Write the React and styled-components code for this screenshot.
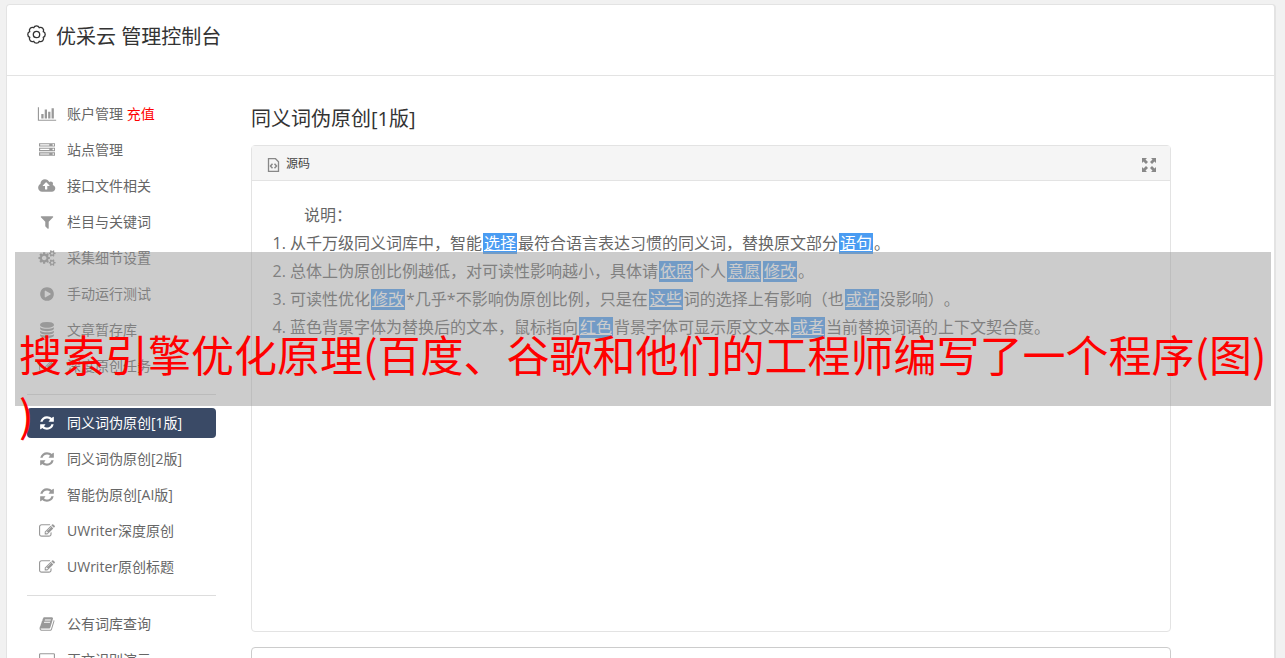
import React from "react";
import styled, { createGlobalStyle, css } from "styled-components";

const GlobalStyle = createGlobalStyle`
  * {
    box-sizing: border-box;
  }

  body {
    margin: 0;
    height: 100vh;
    overflow: hidden;
    background-color: #f1f1f1;
    color: #666;
    font-family: "Open Sans", "Noto Sans CJK SC", sans-serif;
    font-size: 14px;
    font-weight: 400;
    text-spacing-trim: space-all;
  }
`;

const Page = styled.div`
  position: relative;
  padding: 4px 9px 0 6px;
`;

const Panel = styled.div`
  min-height: 100vh;
  background-color: white;
  border: 1px solid #e3e3e3;
  border-right-width: 2px;
  border-radius: 4px;
`;

const Header = styled.header`
  display: flex;
  align-items: flex-start;
  gap: 10px;
  height: 71px;
  padding: 16px 20px;
  border-bottom: 1px solid #e3e3e3;
  color: #333;
`;

const HeaderIcon = styled.svg`
  width: 19px;
  height: 19px;
  margin-top: 4px;
`;

const Title = styled.h1`
  margin: 0;
  font-size: 20px;
  font-weight: 400;
  line-height: 31px;
`;

const Columns = styled.div`
  display: flex;
  gap: 35px;
  padding: 20px 103px 0 20px;
`;

const Sidebar = styled.nav`
  flex: 0 0 189px;
`;

const NavList = styled.ul`
  margin: 0;
  padding: 0 0 10px;
  list-style: none;

  & + & {
    padding-top: 10px;
    border-top: 1px solid #ddd;
  }
`;

const NavItem = styled.li`
  padding: 3px 0;
`;

const NavLink = styled.a`
  display: flex;
  align-items: center;
  gap: 10px;
  height: 30px;
  padding: 0 10px;
  border-radius: 4px;
  color: #666;
  line-height: 30px;
  text-decoration: none;
  white-space: nowrap;

  svg {
    flex: 0 0 20px;
    height: 16px;
    color: #999;
    fill: currentColor;
  }

  ${props => props.$active && css`
    background-color: #3a4a66;
    color: white;

    svg {
      color: white;
    }
  `}
`;

const Recharge = styled.span`
  color: red;
`;

const Main = styled.main`
  flex: 1;
  min-width: 0;
`;

const Heading = styled.h2`
  margin: 7px 0 11px;
  color: #333;
  font-size: 20px;
  font-weight: 400;
  line-height: 31px;
`;

const Editor = styled.section`
  border: 1px solid #e3e3e3;
  border-radius: 4px;
`;

const Toolbar = styled.div`
  display: flex;
  align-items: center;
  justify-content: space-between;
  height: 35px;
  padding: 0 13px 0 15px;
  border-bottom: 1px solid #e3e3e3;
  background-color: #f5f5f5;
`;

const ToolButton = styled.button`
  display: flex;
  align-items: center;
  gap: 6px;
  padding: 0;
  border: none;
  background: none;
  color: #444;
  font: inherit;
  font-size: 12px;

  svg {
    margin-top: 3px;
    color: #888;
  }
`;

const Content = styled.div`
  min-height: 450px;
  padding: 20px;
  font-size: 16px;
  line-height: 28px;
`;

const Intro = styled.p`
  margin: 0;
  text-indent: 2em;
`;

const Rules = styled.ol`
  margin: 0;
  padding-left: 18px;
`;

const Word = styled.u`
  display: inline-block;
  margin: 0 1px;
  padding: 0 1px;
  background-color: #4a9cf2;
  color: white;
  line-height: 21px;
`;

const Source = styled.textarea`
  display: block;
  width: 100%;
  height: 120px;
  margin-top: 15px;
  border: 1px solid #ccc;
  border-radius: 4px;
  resize: none;
`;

const Banner = styled.div`
  position: absolute;
  top: 252px;
  left: 15px;
  right: 14px;
  height: 154px;
  padding: 71px 0 0 4px;
  background-color: rgba(153, 153, 153, 0.5);
  color: red;
  font-family: "Noto Sans CJK SC", sans-serif;
  font-size: 43px;
  line-height: 60px;
  line-break: anywhere;
`;

const icons = {
  chart: ["0 0 2048 1792", "M640 896v512h-256v-512h256zm384-512v1024h-256v-1024h256zm1024 1152v128h-2048v-1536h128v1408h1920zm-640-896v768h-256v-768h256zm384-384v1152h-256v-1152h256z"],
  server: ["0 0 1792 1792", "M128 1408h1024v-128h-1024v128zm0-512h1024v-128h-1024v128zm1568 448q0-40-28-68t-68-28-68 28-28 68 28 68 68 28 68-28 28-68zm-1568-960h1024v-128h-1024v128zm1568 448q0-40-28-68t-68-28-68 28-28 68 28 68 68 28 68-28 28-68zm0-512q0-40-28-68t-68-28-68 28-28 68 28 68 68 28 68-28 28-68zm96 832v384h-1792v-384h1792zm0-512v384h-1792v-384h1792zm0-512v384h-1792v-384h1792z"],
  upload: ["0 0 1856 1792", "M1216 864q0-14-9-23l-352-352q-9-9-23-9t-23 9l-351 351q-10 12-10 24 0 14 9 23t23 9h224v352q0 13 9.5 22.5t22.5 9.5h192q13 0 22.5-9.5t9.5-22.5v-352h224q13 0 22.5-9.5t9.5-22.5zm640 288q0 159-112.5 271.5t-271.5 112.5h-1088q-185 0-316.5-131.5t-131.5-316.5q0-130 70-240t188-165q-2-30-2-43 0-212 150-362t362-150q156 0 285.5 87t188.5 231q71-62 166-62 106 0 181 75t75 181q0 76-41 138 130 31 213.5 135.5t83.5 238.5z"],
  filter: ["0 0 1792 1792", "M1595 295q17 41-14 70l-493 493v742q0 42-39 59-13 5-25 5-27 0-45-19l-256-256q-19-19-19-45v-486l-493-493q-31-29-14-70 17-39 59-39h1280q42 0 59 39z"],
  cogs: ["0 0 1920 1792", "M896 896q0-106-75-181t-181-75-181 75-75 181 75 181 181 75 181-75 75-181zm768 512q0-52-38-90t-90-38-90 38-38 90q0 53 37.5 90.5t90.5 37.5 90.5-37.5 37.5-90.5zm0-1024q0-52-38-90t-90-38-90 38-38 90q0 53 37.5 90.5t90.5 37.5 90.5-37.5 37.5-90.5zm-384 421v185q0 10-7 19.5t-16 10.5l-155 24q-11 35-32 76 34 48 90 115 7 11 7 20 0 12-7 19-23 30-82.5 89.5t-78.5 59.5q-11 0-21-7l-115-90q-37 19-77 31-11 108-23 155-7 24-30 24h-186q-11 0-20-7.5t-10-17.5l-23-153q-34-10-75-31l-118 89q-7 7-20 7-11 0-21-8-144-133-144-160 0-9 7-19 10-14 41-53t47-61q-23-44-35-82l-152-24q-10-1-17-9.5t-7-19.5v-185q0-10 7-19.5t16-10.5l155-24q11-35 32-76-34-48-90-115-7-11-7-20 0-12 7-20 22-30 82-89t79-59q11 0 21 7l115 90q34-18 77-32 11-108 23-154 7-24 30-24h186q11 0 20 7.5t10 17.5l23 153q34 10 75 31l118-89q8-7 20-7 11 0 21 8 144 133 144 160 0 8-7 19-12 16-42 54t-45 60q23 48 34 82l152 23q10 2 17 10.5t7 19.5zm640 533v140q0 16-149 31-12 27-30 52 51 113 51 138 0 4-4 7-122 71-124 71-8 0-46-47t-52-68q-20 2-30 2t-30-2q-14 21-52 68t-46 47q-2 0-124-71-4-3-4-7 0-25 51-138-18-25-30-52-149-15-149-31v-140q0-16 149-31 13-29 30-52-51-113-51-138 0-4 4-7 4-2 35-20t59-34 30-16q8 0 46 46.5t52 67.5q20-2 30-2t30 2q51-71 92-112l6-2q4 0 124 70 4 3 4 7 0 25-51 138 17 23 30 52 149 15 149 31zm0-1024v140q0 16-149 31-12 27-30 52 51 113 51 138 0 4-4 7-122 71-124 71-8 0-46-47t-52-68q-20 2-30 2t-30-2q-14 21-52 68t-46 47q-2 0-124-71-4-3-4-7 0-25 51-138-18-25-30-52-149-15-149-31v-140q0-16 149-31 13-29 30-52-51-113-51-138 0-4 4-7 4-2 35-20t59-34 30-16q8 0 46 46.5t52 67.5q20-2 30-2t30 2q51-71 92-112l6-2q4 0 124 70 4 3 4 7 0 25-51 138 17 23 30 52 149 15 149 31z"],
  play: ["0 0 1792 1792", "M896 128q209 0 385.5 103t279.5 279.5 103 385.5-103 385.5-279.5 279.5-385.5 103-385.5-103-279.5-279.5-103-385.5 103-385.5 279.5-279.5 385.5-103zm384 823q32-18 32-55t-32-55l-544-320q-31-19-64-1-32 19-32 56v640q0 37 32 56 16 8 32 8 17 0 32-9z"],
  database: ["0 0 1792 1792", "M896 768q237 0 443-43t325-127v170q0 69-103 128t-280 93.5-385 34.5-385-34.5-280-93.5-103-128v-170q119 84 325 127t443 43zm0 768q237 0 443-43t325-127v170q0 69-103 128t-280 93.5-385 34.5-385-34.5-280-93.5-103-128v-170q119 84 325 127t443 43zm0-384q237 0 443-43t325-127v170q0 69-103 128t-280 93.5-385 34.5-385-34.5-280-93.5-103-128v-170q119 84 325 127t443 43zm0-1152q208 0 385 34.5t280 93.5 103 128v128q0 69-103 128t-280 93.5-385 34.5-385-34.5-280-93.5-103-128v-128q0-69 103-128t280-93.5 385-34.5z"],
  edit: ["0 0 1792 1792", "M888 1184l116-116-152-152-116 116v56h96v96h56zm440-720q-16-16-33 1l-350 350q-17 17-1 33t33-1l350-350q17-17 1-33zm80 594v190q0 119-84.5 203.5t-203.5 84.5h-832q-119 0-203.5-84.5t-84.5-203.5v-832q0-119 84.5-203.5t203.5-84.5h832q63 0 117 25 15 7 18 23 3 17-9 29l-49 49q-14 14-32 8-23-6-45-6h-832q-66 0-113 47t-47 113v832q0 66 47 113t113 47h832q66 0 113-47t47-113v-126q0-13 9-22l64-64q15-15 35-7t20 29zm-96-738l288 288-672 672h-288v-288zm444 132l-92 92-288-288 92-92q28-28 68-28t68 28l152 152q28 28 28 68t-28 68z"],
  refresh: ["0 0 1792 1792", "M1639 1056q0 5-1 7-64 268-268 434.5t-478 166.5q-146 0-282.5-55t-243.5-157l-129 129q-19 19-45 19t-45-19-19-45v-448q0-26 19-45t45-19h448q26 0 45 19t19 45-19 45l-137 137q71 66 161 102t187 36q134 0 250-65t186-179q11-17 53-117 8-23 30-23h192q13 0 22.5 9.5t9.5 22.5zm25-800v448q0 26-19 45t-45 19h-448q-26 0-45-19t-19-45 19-45l138-138q-148-137-349-137-134 0-250 65t-186 179q-11 17-53 117-8 23-30 23h-199q-13 0-22.5-9.5t-9.5-22.5v-7q65-268 270-434.5t480-166.5q146 0 284 55.5t245 156.5l130-129q19-19 45-19t45 19 19 45z"],
  book: ["0 0 1792 1792", "M1703 478q40 57 18 129l-275 906q-19 64-76.5 107.5t-122.5 43.5h-923q-77 0-148.5-53.5t-99.5-131.5q-24-67-2-127 0-4 3-27t4-37q1-8-3-21.5t-3-19.5q2-11 8-21t16.5-23.5 16.5-23.5q23-38 45-91.5t30-91.5q3-10 .5-30t-.5-28q3-11 17-28t17-23q21-36 42-92t25-90q1-9-2.5-32t.5-28q4-13 22-30.5t22-22.5q19-26 42.5-84.5t27.5-96.5q1-8-3-25.5t-2-26.5q2-8 9-18t18-23 17-21q8-12 16.5-30.5t15-35 16-36 19.5-32 26.5-23.5 36-11.5 47.5 5.5l-1 3q38-9 51-9h761q74 0 114 56t18 130l-274 906q-36 119-71.5 153.5t-128.5 34.5h-869q-27 0-38 15-11 16-1 43 24 70 144 70h923q29 0 56-15.5t35-41.5l300-987q7-22 5-57 38 15 59 43zm-1064 2q-4 13 2 22.5t20 9.5h608q13 0 25.5-9.5t16.5-22.5l21-64q4-13-2-22.5t-20-9.5h-608q-13 0-25.5 9.5t-16.5 22.5zm-83 256q-4 13 2 22.5t20 9.5h608q13 0 25.5-9.5t16.5-22.5l21-64q4-13-2-22.5t-20-9.5h-608q-13 0-25.5 9.5t-16.5 22.5z"],
  screen: ["0 0 1792 1792", "M160 128h1472q66 0 113 47t47 113v1088q0 66-47 113t-113 47h-1472q-66 0-113-47t-47-113v-1088q0-66 47-113t113-47zm0 128q-32 0-32 32v1088q0 32 32 32h1472q32 0 32-32v-1088q0-32-32-32z"]
};

const groups = [
  [
    { icon: "chart", label: "账户管理", extra: "充值" },
    { icon: "server", label: "站点管理" },
    { icon: "upload", label: "接口文件相关" },
    { icon: "filter", label: "栏目与关键词" },
    { icon: "cogs", label: "采集细节设置" },
    { icon: "play", label: "手动运行测试" },
    { icon: "database", label: "文章暂存库" },
    { icon: "edit", label: "深度原创任务" }
  ],
  [
    { icon: "refresh", label: "同义词伪原创[1版]", active: true },
    { icon: "refresh", label: "同义词伪原创[2版]" },
    { icon: "refresh", label: "智能伪原创[AI版]" },
    { icon: "edit", label: "UWriter深度原创" },
    { icon: "edit", label: "UWriter原创标题" }
  ],
  [
    { icon: "book", label: "公有词库查询" },
    { icon: "screen", label: "正文识别演示" }
  ]
];

function Icon({ name }) {
  const [viewBox, d] = icons[name];
  return <svg viewBox={viewBox} aria-hidden="true"><path fillRule="evenodd" d={d} /></svg>;
}

// eight rounded lobes around a small ring
function GearIcon() {
  return (
    <HeaderIcon viewBox="0 0 19 19" fill="none" stroke="currentColor" strokeWidth="1.3" aria-hidden="true">
      <path d="M6.700 2.700a3 3 0 0 1 5.600 0a3 3 0 0 1 4 4a3 3 0 0 1 0 5.600a3 3 0 0 1-4 4a3 3 0 0 1-5.600 0a3 3 0 0 1-4-4a3 3 0 0 1 0-5.600a3 3 0 0 1 4-4z" />
      <circle cx="9.5" cy="9.5" r="3.2" />
    </HeaderIcon>
  );
}

function App() {
  return (
    <Page>
      <GlobalStyle />
      <Panel>
        <Header>
          <GearIcon />
          <Title>优采云 管理控制台</Title>
        </Header>
        <Columns>
          <Sidebar>
            {groups.map((items, i) => (
              <NavList key={i}>
                {items.map(item => (
                  <NavItem key={item.label}>
                    <NavLink href="#" $active={item.active}>
                      <Icon name={item.icon} />
                      <span>{item.label}{item.extra && <Recharge> {item.extra}</Recharge>}</span>
                    </NavLink>
                  </NavItem>
                ))}
              </NavList>
            ))}
          </Sidebar>
          <Main>
            <Heading>同义词伪原创[1版]</Heading>
            <Editor>
              <Toolbar>
                <ToolButton type="button">
                  <svg width="13" height="14" viewBox="0 0 13 14" fill="none" stroke="currentColor" aria-hidden="true">
                    <path strokeWidth="1.3" d="M1.500.7H8.500l3 3V13.300H1.500z" />
                    <path strokeWidth="1.5" d="M5.500 5.800L3.500 8l2 2.200M7.500 5.800L9.500 8l-2 2.200" />
                  </svg>
                  源码
                </ToolButton>
                <ToolButton type="button" aria-label="全屏">
                  <svg width="16" height="16" viewBox="0 0 16 16" fill="currentColor" aria-hidden="true">
                    <path d="M1 1h5L4.500 2.500l2.500 2.500-2 2-2.500-2.500L1 6zM15 1v5l-1.500-1.500L11 7 9 5l2.500-2.500L10 1zM1 15v-5l1.500 1.500L5 9l2 2-2.500 2.500L6 15zM15 15h-5l1.500-1.500L9 11l2-2 2.500 2.500L15 10z" />
                  </svg>
                </ToolButton>
              </Toolbar>
              <Content>
                <Intro>说明：</Intro>
                <Rules>
                  <li>从千万级同义词库中，智能<Word>选择</Word>最符合语言表达习惯的同义词，替换原文部分<Word>语句</Word>。</li>
                  <li>总体上伪原创比例越低，对可读性影响越小，具体请<Word>依照</Word>个人<Word>意愿</Word><Word>修改</Word>。</li>
                  <li>可读性优化<Word>修改</Word>*几乎*不影响伪原创比例，只是在<Word>这些</Word>词的选择上有影响（也<Word>或许</Word>没影响）。</li>
                  <li>蓝色背景字体为替换后的文本，鼠标指向<Word>红色</Word>背景字体可显示原文文本<Word>或者</Word>当前替换词语的上下文契合度。</li>
                </Rules>
              </Content>
            </Editor>
            <Source aria-label="源码" />
          </Main>
        </Columns>
      </Panel>
      <Banner>搜索引擎优化原理(百度、谷歌和他们的工程师编写了一个程序(图))</Banner>
    </Page>
  );
}

export default App;
